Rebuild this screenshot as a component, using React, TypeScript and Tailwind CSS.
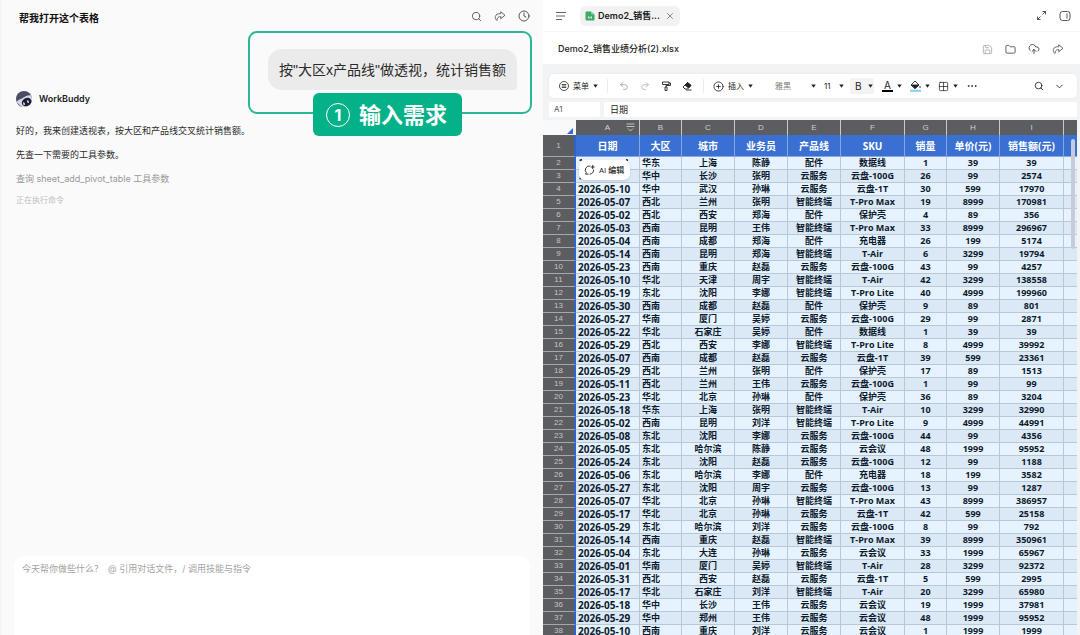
import React from "react";
import {
  Search,
  Clock,
  X,
  Folder,
  CloudUpload,
  Undo2,
  Redo2,
  ChevronDown,
  Grid2x2,
  CirclePlus,
  Ellipsis,
  Save,
} from "lucide-react";

const columns = ["A", "B", "C", "D", "E", "F", "G", "H", "I"];

const headers = ["日期", "大区", "城市", "业务员", "产品线", "SKU", "销量", "单价(元)", "销售额(元)"];

const rows = [
  ["", "华东", "上海", "陈静", "配件", "数据线", "1", "39", "39"],
  ["", "华中", "长沙", "张明", "云服务", "云盘-100G", "26", "99", "2574"],
  ["2026-05-10", "华中", "武汉", "孙琳", "云服务", "云盘-1T", "30", "599", "17970"],
  ["2026-05-07", "西北", "兰州", "张明", "智能终端", "T-Pro Max", "19", "8999", "170981"],
  ["2026-05-02", "西北", "西安", "郑海", "配件", "保护壳", "4", "89", "356"],
  ["2026-05-03", "西南", "昆明", "王伟", "智能终端", "T-Pro Max", "33", "8999", "296967"],
  ["2026-05-04", "西南", "成都", "郑海", "配件", "充电器", "26", "199", "5174"],
  ["2026-05-14", "西南", "昆明", "郑海", "智能终端", "T-Air", "6", "3299", "19794"],
  ["2026-05-23", "西南", "重庆", "赵磊", "云服务", "云盘-100G", "43", "99", "4257"],
  ["2026-05-10", "华北", "天津", "周宇", "智能终端", "T-Air", "42", "3299", "138558"],
  ["2026-05-19", "东北", "沈阳", "李娜", "智能终端", "T-Pro Lite", "40", "4999", "199960"],
  ["2026-05-30", "西南", "成都", "赵磊", "配件", "保护壳", "9", "89", "801"],
  ["2026-05-27", "华南", "厦门", "吴婷", "云服务", "云盘-100G", "29", "99", "2871"],
  ["2026-05-22", "华北", "石家庄", "吴婷", "配件", "数据线", "1", "39", "39"],
  ["2026-05-29", "西北", "西安", "李娜", "智能终端", "T-Pro Lite", "8", "4999", "39992"],
  ["2026-05-07", "西南", "成都", "赵磊", "云服务", "云盘-1T", "39", "599", "23361"],
  ["2026-05-29", "西北", "兰州", "张明", "配件", "保护壳", "17", "89", "1513"],
  ["2026-05-11", "西北", "兰州", "王伟", "云服务", "云盘-100G", "1", "99", "99"],
  ["2026-05-23", "华北", "北京", "孙琳", "配件", "保护壳", "36", "89", "3204"],
  ["2026-05-18", "华东", "上海", "张明", "智能终端", "T-Air", "10", "3299", "32990"],
  ["2026-05-02", "西南", "昆明", "刘洋", "智能终端", "T-Pro Lite", "9", "4999", "44991"],
  ["2026-05-08", "东北", "沈阳", "李娜", "云服务", "云盘-100G", "44", "99", "4356"],
  ["2026-05-05", "东北", "哈尔滨", "陈静", "云服务", "云会议", "48", "1999", "95952"],
  ["2026-05-24", "东北", "沈阳", "赵磊", "云服务", "云盘-100G", "12", "99", "1188"],
  ["2026-05-06", "东北", "哈尔滨", "李娜", "配件", "充电器", "18", "199", "3582"],
  ["2026-05-27", "东北", "沈阳", "周宇", "云服务", "云盘-100G", "13", "99", "1287"],
  ["2026-05-07", "华北", "北京", "孙琳", "智能终端", "T-Pro Max", "43", "8999", "386957"],
  ["2026-05-17", "华北", "北京", "孙琳", "云服务", "云盘-1T", "42", "599", "25158"],
  ["2026-05-29", "东北", "哈尔滨", "刘洋", "云服务", "云盘-100G", "8", "99", "792"],
  ["2026-05-14", "西南", "重庆", "赵磊", "智能终端", "T-Pro Max", "39", "8999", "350961"],
  ["2026-05-04", "东北", "大连", "孙琳", "云服务", "云会议", "33", "1999", "65967"],
  ["2026-05-01", "华南", "厦门", "吴婷", "智能终端", "T-Air", "28", "3299", "92372"],
  ["2026-05-31", "西北", "西安", "赵磊", "云服务", "云盘-1T", "5", "599", "2995"],
  ["2026-05-17", "华北", "石家庄", "刘洋", "智能终端", "T-Air", "20", "3299", "65980"],
  ["2026-05-18", "华中", "长沙", "王伟", "云服务", "云会议", "19", "1999", "37981"],
  ["2026-05-29", "华中", "郑州", "王伟", "云服务", "云会议", "48", "1999", "95952"],
  ["2026-05-10", "西南", "重庆", "刘洋", "云服务", "云会议", "1", "1999", "1999"],
];

function Caret() {
  return (
    <svg width="5" height="4" viewBox="0 0 5 4" className="shrink-0" fill="#222">
      <path d="M0.3 0.4h4.4L2.5 3.8z" />
    </svg>
  );
}

function Divider() {
  return <span className="h-3.5 w-px shrink-0 bg-[#ededed]" />;
}

function ShareIcon() {
  return (
    <svg width="12" height="12" viewBox="0 0 24 24" fill="none" stroke="currentColor" strokeWidth="1.6" strokeLinejoin="round">
      <path d="M13.500 3.500 22 10.500l-8.500 7v-4.300c-3.600-.2-5.200.9-6.400 3.200-.6 1.200-1 2.800-1.300 4.600C3 18.500 2 15.800 2.700 13c1-3.900 4.800-5.800 10.800-5.700z" />
    </svg>
  );
}

function Avatar() {
  return (
    <svg width="16" height="16" viewBox="0 0 48 48">
      <circle cx="24" cy="24" r="24" fill="#4b4c64" />
      <path d="M2 33C7 25 13 26 20 21c8-5 15-9 25-8 5 9 4 20-1 27-8 9-26 13-36 4z" fill="#d5d6ea" />
      <path d="M3 35c5 2 7 6 15 12-7-2-12-6-15-12z" fill="#6a6b85" />
      <ellipse cx="32" cy="33" rx="15" ry="12" transform="rotate(-28 32 33)" fill="#1c1c2c" />
      <rect x="22" y="34" width="4" height="8" rx="2" fill="#fff" transform="rotate(-14 24 38)" />
      <rect x="34" y="28" width="4" height="8" rx="2" fill="#fff" transform="rotate(-14 36 32)" />
    </svg>
  );
}

function ChatPanel() {
  return (
    <section className="flex min-w-0 flex-col border-l-2 border-[#f5f5f5] bg-[#fafafa]">
      <header className="flex h-8 shrink-0 items-center justify-between pr-[13px] pl-[17px]">
        <h1 className="pt-1 text-[10px] font-bold text-[#111]">帮我打开这个表格</h1>
        <div className="flex gap-3 text-[#444]">
          <button aria-label="搜索"><Search size={11} strokeWidth={1.8} /></button>
          <button aria-label="分享"><ShareIcon /></button>
          <button aria-label="历史"><Clock size={12} strokeWidth={1.8} /></button>
        </div>
      </header>

      <div className="mt-[17px] mr-[26px] flex justify-end">
        <div className="relative">
          <p className="rounded-[14px] rounded-br-[3px] bg-[#ebebeb] px-[11px] pt-[11px] pb-[9px] font-['Liberation_Sans','Noto_Sans_CJK_SC',sans-serif] text-[14px] leading-[21px] text-[#2b2b2b]">
            按"大区x产品线"做透视，统计销售额
          </p>
          {/* highlight box with step label */}
          <div className="absolute -top-[18px] -right-[15px] -bottom-6 -left-5 rounded-[9px] border-2 border-[#2bb795]">
            <div className="absolute -bottom-6 left-[63px] flex h-[43px] items-center gap-[9px] rounded-[6px] bg-[#05b188] pr-[15px] pl-[13px] text-white">
              <span className="flex size-6 items-center justify-center rounded-full border border-white text-[16px] font-bold">1</span>
              <span className="text-[22px] leading-none font-bold whitespace-nowrap">输入需求</span>
            </div>
          </div>
        </div>
      </div>

      <div className="flex-1 px-[14px] pt-px">
        <div className="flex items-center gap-[7px]">
          <Avatar />
          <span className="text-[9px] font-semibold text-[#222]">WorkBuddy</span>
        </div>
        <div className="mt-[18px] flex flex-col gap-3 text-[9px] leading-3 text-[#2c2c2c]">
          <p>好的，我来创建透视表，按大区和产品线交叉统计销售额。</p>
          <p>先查一下需要的工具参数。</p>
          <p className="text-[#999]">查询 sheet_add_pivot_table 工具参数</p>
        </div>
        <p className="mt-[9px] text-[8px] leading-3 text-[#bdbdbd]">正在执行命令</p>
      </div>

      <textarea
        aria-label="输入消息"
        placeholder="今天帮你做些什么？  @ 引用对话文件，/ 调用技能与指令"
        className="mr-[13px] ml-3 h-[79px] shrink-0 resize-none rounded-t-[10px] bg-white px-2 py-[7px] text-[9px] leading-3 outline-none placeholder:text-[#a3a3a3]"
      />
    </section>
  );
}

function FileBar() {
  return (
    <div className="bg-white">
      <div className="flex h-8 items-center border-b border-[#f7f7f7] pr-[9px] pl-3 text-[#444]">
        <button aria-label="菜单列表">
          <svg width="12" height="10" viewBox="0 0 12 10" stroke="#666" strokeWidth="1">
            <path d="M1 1.500h10M1 5h9M1 8.500h6" />
          </svg>
        </button>
        <div className="ml-[13px] flex h-5 items-center rounded-[6px] bg-[#f2f2f2] px-[5px]">
          <svg width="10" height="10" viewBox="0 0 20 20">
            <path d="M3 1h9l7 6v10a2 2 0 0 1-2 2H3a2 2 0 0 1-2-2V3a2 2 0 0 1 2-2z" fill="#3fa968" />
            <path d="M12 1v4a2 2 0 0 0 2 2h5z" fill="#8ad3a5" />
            <path d="M6 11h3v4H6zM11 11h3v4h-3z" fill="#d9f2e2" />
          </svg>
          <span className="ml-[3px] text-[9px] font-semibold text-[#222]">Demo2_销售...</span>
          <button aria-label="关闭" className="ml-[5px]"><X size={10} strokeWidth={1.8} color="#666" /></button>
        </div>
        <div className="ml-auto flex items-center gap-3">
          <button aria-label="展开">
            <svg width="11" height="11" viewBox="0 0 22 22" fill="none" stroke="currentColor" strokeWidth="1.8">
              <path d="M13 3h6v6M19 3l-6 6M9 19H3v-6M3 19l6-6" />
            </svg>
          </button>
          <button aria-label="侧栏">
            <svg width="12" height="12" viewBox="0 0 24 24" fill="none" stroke="currentColor" strokeWidth="1.8">
              <rect x="2" y="3" width="20" height="18" rx="5" />
              <path d="M16 7v10" />
            </svg>
          </button>
        </div>
      </div>
      <div className="flex h-8 items-center justify-between pt-[2px] pr-4 pl-[15px]">
        <h2 className="text-[9px] font-medium text-[#222]">Demo2_销售业绩分析(2).xlsx</h2>
        <div className="flex items-center gap-3 text-[#444]">
          <button aria-label="保存" className="text-[#aaa]"><Save size={11} strokeWidth={1.8} /></button>
          <button aria-label="文件夹"><Folder size={11} strokeWidth={1.8} /></button>
          <button aria-label="上传"><CloudUpload size={12} strokeWidth={1.8} /></button>
          <button aria-label="分享文件"><ShareIcon /></button>
        </div>
      </div>
    </div>
  );
}

function Toolbar() {
  return (
    <div className="flex h-6 items-center rounded-[5px] bg-white pr-3 pl-[10px] text-[8px] text-[#222] shadow-[0_0_2px_rgba(0,0,0,0.08)]">
      <button className="flex items-center gap-1 whitespace-nowrap">
        <svg width="10" height="10" viewBox="0 0 20 20" fill="none" stroke="currentColor" strokeWidth="1.6">
          <circle cx="10" cy="10" r="9" />
          <path d="M5.500 7h9M5.500 10h9M5.500 13h9" />
        </svg>
        菜单
        <Caret />
      </button>
      <div className="mx-[9px] flex items-center gap-[11px]">
        <Divider />
        <button aria-label="撤销" className="text-[#999]"><Undo2 size={10} strokeWidth={1.8} /></button>
        <button aria-label="重做" className="text-[#aaa]"><Redo2 size={10} strokeWidth={1.8} /></button>
        <button aria-label="格式刷">
          <svg width="10" height="10" viewBox="0 0 20 20" fill="none" stroke="currentColor" strokeWidth="1.8">
            <path d="M3 2h13v5H3zM16 4h3v5h-9v3M8 12h4v7H8z" />
          </svg>
        </button>
        <button aria-label="清除">
          <svg width="10" height="10" viewBox="0 0 20 20" fill="none" stroke="currentColor" strokeWidth="1.8">
            <path d="M11 3l7 6-7 7H6l-4-4z" strokeLinejoin="round" />
            <path d="M11 3l7 6-5 5-7-6z" fill="currentColor" />
            <path d="M8 18h11" />
          </svg>
        </button>
        <Divider />
      </div>
      <button className="flex items-center gap-1 whitespace-nowrap">
        <CirclePlus size={11} strokeWidth={1.8} />
        插入
        <Caret />
      </button>
      <div className="mr-3 ml-[10px]"><Divider /></div>
      <label className="flex items-center">
        <select aria-label="字体" className="w-9 appearance-none text-[#777] outline-none">
          <option>雅黑</option>
        </select>
        <Caret />
      </label>
      <label className="ml-2 flex items-center">
        <select aria-label="字号" className="w-[15px] appearance-none outline-none">
          <option>11</option>
        </select>
        <Caret />
      </label>
      <div className="ml-[6px] flex items-center gap-2">
        <button aria-label="加粗" className="flex h-4 w-6 items-center gap-[6px] rounded-[2px] bg-[#f3f3f3] pl-[5px]">
          <span className="text-[10px]">B</span>
          <Caret />
        </button>
        <button aria-label="字体颜色" className="flex items-center gap-1">
          <span className="w-[11px] border-b-2 border-black text-center text-[10px] leading-[10px]">A</span>
          <Caret />
        </button>
        <button aria-label="填充颜色" className="flex items-center gap-1">
          <svg width="11" height="12" viewBox="0 0 22 24" fill="none" stroke="#222" strokeWidth="1.8">
            <path d="M10 2l8 8-8 7-8-7z" />
            <path d="M3 10h14l-7 7z" fill="#222" />
            <path d="M20 12v4" />
            <path d="M0 21.500h22" stroke="#7fd0ea" strokeWidth="4" />
          </svg>
          <Caret />
        </button>
        <button aria-label="边框" className="flex items-center gap-1">
          <Grid2x2 size={11} strokeWidth={1.6} />
          <Caret />
        </button>
        <button aria-label="更多"><Ellipsis size={12} strokeWidth={1.6} /></button>
      </div>
      <div className="ml-auto flex items-center gap-[10px]">
        <button aria-label="查找"><Search size={10} strokeWidth={2} /></button>
        <button aria-label="收起"><ChevronDown size={11} strokeWidth={1.8} /></button>
      </div>
    </div>
  );
}

function Sheet() {
  return (
    <div className="relative mt-[3px] mr-[3px] min-h-0 flex-1 overflow-hidden">
      <table className="w-full table-fixed border-separate border-spacing-0 text-center whitespace-nowrap">
        <colgroup>
          <col className="w-[33px]" />
          <col className="w-[64px]" />
          <col className="w-[42px]" />
          <col className="w-[53px]" />
          <col className="w-[53px]" />
          <col className="w-[53px]" />
          <col className="w-[64px]" />
          <col className="w-[42px]" />
          <col className="w-[53px]" />
          <col className="w-[64px]" />
          <col />
        </colgroup>
        <thead>
          <tr className="h-[15px] bg-[#5c5d60] font-['Liberation_Sans',sans-serif] text-[8px] leading-[14px] text-[#d0d0d0]">
            <th className="bg-[#f8f9fa] p-0">
              <svg width="6" height="6" viewBox="0 0 6 6" className="mt-[6px] mr-[3px] ml-auto" fill="#2f6be0">
                <path d="M6 0v6H0z" />
              </svg>
            </th>
            {columns.map((c) => (
              <th key={c} className="relative border-r border-[#c9c9c9] p-0 font-normal">
                {c}
                {c === "A" && (
                  <svg width="9" height="9" viewBox="0 0 18 18" className="absolute top-[3px] right-1" fill="none" stroke="#ddd" strokeWidth="1.6">
                    <path d="M1 2h16M1 7h16M4 11l5 5 5-5" />
                  </svg>
                )}
              </th>
            ))}
            <th className="p-0" />
          </tr>
        </thead>
        <tbody className="text-[9px] leading-3 font-bold text-[#0d1b2e]">
          <tr className="h-[22px] bg-[#3a70d2] text-[10px] leading-5 text-white">
            <th className="border-r-2 border-b border-r-[#2c63cf] border-b-[#a8a8a8] bg-[#5c5d60] p-0 font-['Liberation_Sans',sans-serif] text-[8px] font-normal text-[#c4c4c4]">1</th>
            {headers.map((h) => (
              <th key={h} className="border-r border-b border-[#86a8e2] p-0 pt-px">{h}</th>
            ))}
            <td className="border-b border-[#86a8e2] p-0" />
          </tr>
          {rows.map((row, i) => (
            <tr key={i} className="h-[13px] even:bg-[#e6f3ff] odd:bg-[#dbe8f6]">
              <th className="border-r-2 border-b border-r-[#2c63cf] border-b-[#a8a8a8] bg-[#5c5d60] p-0 font-['Liberation_Sans',sans-serif] text-[8px] font-normal text-[#c4c4c4]">
                {i + 2}
              </th>
              {row.map((cell, j) => (
                <td
                  key={j}
                  className={
                    j === 0
                      ? "border-r border-b border-[#b9c8d8] p-0 pl-[2px] text-left text-[10px]"
                      : j === 1
                        ? "border-r border-b border-[#b9c8d8] p-0 pl-[2px] text-left"
                        : "border-r border-b border-[#b9c8d8] p-0"
                  }
                >
                  {cell}
                </td>
              ))}
              <td className="border-b border-[#b9c8d8] p-0" />
            </tr>
          ))}
        </tbody>
      </table>

      {/* corner marks and the floating edit button */}
      <svg width="50" height="21" viewBox="0 0 50 21" className="absolute top-[39px] left-9" stroke="#222" strokeWidth="1.5" fill="none">
        <path d="M0.500 1.500L3 0.500M47 0.500l2 1M0.500 19.500h2" />
      </svg>
      <button className="absolute top-10 left-9 flex h-5 items-center gap-1 rounded-[6px] bg-white pr-[6px] pl-[5px] text-[8px] font-medium text-[#222] shadow-sm">
        <svg width="11" height="12" viewBox="0 0 24 24" fill="none" stroke="currentColor" strokeWidth="2" strokeLinecap="round">
          <path d="M13 3.200A9 9 0 0 0 5 18l-1.500 3H9" />
          <path d="M21 12a9 9 0 0 1-8 9" />
          <path d="M19 2v7M15.500 5.500h7" />
        </svg>
        AI 编辑
      </button>
      <div className="absolute top-[19px] right-[2px] h-[110px] w-1 rounded-sm bg-[#c6ccdc]" />
    </div>
  );
}

export default function App() {
  return (
    <main className="grid h-screen grid-cols-[543fr_537fr] overflow-hidden font-['Inter','Noto_Sans_CJK_SC',sans-serif]">
      <ChatPanel />
      <section className="flex min-h-0 min-w-0 flex-col bg-[#f1f3f4]">
        <FileBar />
        <div className="mt-[10px] mr-[3px] ml-[6px] flex flex-col gap-1">
          <Toolbar />
          <div className="flex h-[15px] gap-1">
            <input aria-label="单元格" defaultValue="A1" className="w-[51px] rounded-[2px] bg-white px-[5px] text-[8px] leading-[15px] text-[#555] outline-none" />
            <input aria-label="内容" defaultValue="日期" className="min-w-0 flex-1 rounded-[2px] bg-white px-[6px] text-[9px] leading-[15px] text-[#222] outline-none" />
          </div>
        </div>
        <div className="flex min-h-0 flex-1 flex-col font-['Open_Sans','Noto_Sans_CJK_SC',sans-serif]">
          <Sheet />
        </div>
      </section>
    </main>
  );
}
